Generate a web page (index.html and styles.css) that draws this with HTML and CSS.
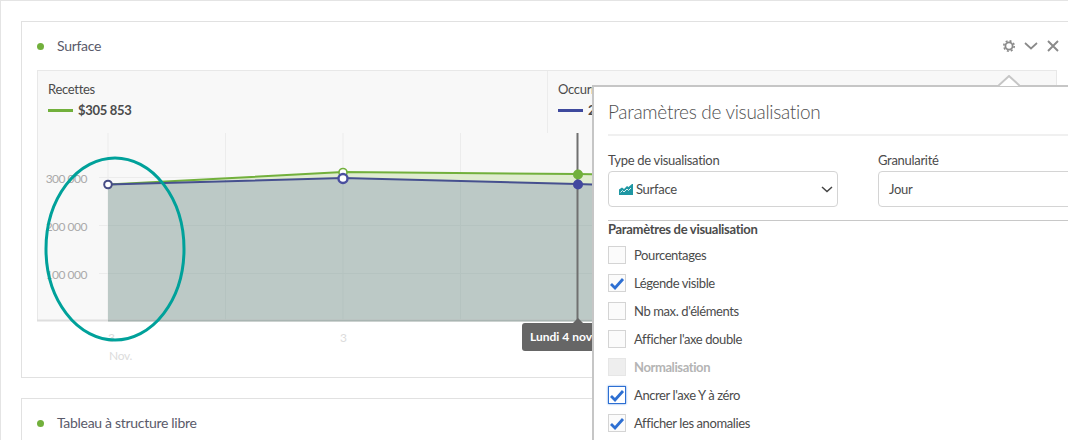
FILE: index.html
```html
<!DOCTYPE html>
<html>
  <head>
    <title>Surface</title>
    <link rel="stylesheet" href="styles.css">
  </head>
  <body>
    <div class="page">
      <section class="card card-surface">
        <div class="card-head">
          <span class="dot"></span>
          <span class="card-title">Surface</span>
          <div class="card-tools">
            <svg class="tool" width="12" height="12" viewBox="0 0 12 12"><circle cx="6" cy="6" r="3.6" fill="none" stroke="#8a8a8a" stroke-width="1.8"/><circle cx="6" cy="6" r="5.2" fill="none" stroke="#8a8a8a" stroke-width="1.6" stroke-dasharray="2 2.08"/></svg>
            <svg class="tool" width="14" height="8" viewBox="0 0 14 8"><path d="M1 1l6 5.5L13 1" fill="none" stroke="#8a8a8a" stroke-width="1.7"/></svg>
            <svg class="tool" width="12" height="12" viewBox="0 0 12 12"><path d="M1 1l10 10M11 1L1 11" fill="none" stroke="#8a8a8a" stroke-width="1.9"/></svg>
          </div>
        </div>
        <div class="chart-panel">
          <div class="legend">
            <div class="legend-item legend-item-first">
              <div class="legend-name">Recettes</div>
              <div class="legend-value"><span class="swatch swatch-green"></span>$305 853</div>
            </div>
            <div class="legend-item">
              <div class="legend-name">Occurrences</div>
              <div class="legend-value"><span class="swatch swatch-blue"></span>2</div>
            </div>
          </div>
          <svg class="plot" width="1019" height="244" viewBox="37 133 1019 244">
            <rect x="37" y="133" width="1019" height="187" fill="#f8f8f8"/>
            <path d="M37.5 133V320M1055.5 133V320" stroke="#e8e8e8"/>
            <path d="M108 133V320M225.5 133V320M343 133V320M460.5 133V320M694 133V320M811 133V320M928 133V320" stroke="#ececec"/>
            <path d="M99 177.5H1056M99 225.5H1056M99 273.5H1056" stroke="#ececec"/>
            <path d="M108 184.500L343 172L577 174L700 176V190L577 184L343 178Z" fill="#dfeccf"/>
            <path d="M108 184.500L343 178L577 184L700 188V320H108Z" fill="#bcc9c6"/>
            <path d="M225.500 180V320M343 178V320M460.500 180V320M108 225.500H700M108 273.500H700" stroke="#b5c3c0"/>
            <path d="M37 320.500H1056" stroke="#dedede" stroke-width="2"/>
            <path d="M108 320.500H700" stroke="#a9b5b2" stroke-width="2"/>
            <path d="M108 184.500L343 172L577 174L700 176" fill="none" stroke="#72b03c" stroke-width="2"/>
            <path d="M108 184.500L343 178L577 184L700 188" fill="none" stroke="#46508f" stroke-width="2"/>
            <path d="M577.500 133V320" stroke="#707070" stroke-width="2"/>
            <circle cx="343" cy="172.500" r="4" fill="#fff" stroke="#72b03c" stroke-width="1.600"/>
            <circle cx="343" cy="178.500" r="4.500" fill="#fff" stroke="#4a4f9f" stroke-width="2.400"/>
            <circle cx="108" cy="184.500" r="3.800" fill="#fff" stroke="#464c85" stroke-width="2"/>
            <circle cx="578" cy="174.500" r="5" fill="#72b03c"/>
            <circle cx="578" cy="184.500" r="5" fill="#42489f"/>
            <text class="y-label" x="87" y="183">300 000</text>
            <text class="y-label" x="87" y="231">200 000</text>
            <text class="y-label" x="87" y="279">100 000</text>
            <text class="x-label" x="108" y="342">3</text>
            <text class="x-label" x="340" y="342">3</text>
            <text class="x-label" x="109" y="360">Nov.</text>
            <ellipse cx="115" cy="249" rx="69" ry="91" fill="none" stroke="#00a19a" stroke-width="3"/>
          </svg>
        </div>
        <div class="tooltip">Lundi 4 novembre</div>
      </section>

      <section class="card">
        <div class="card-head">
          <span class="dot"></span>
          <span class="card-title">Tableau à structure libre</span>
        </div>
      </section>

      <div class="popover">
        <svg class="popover-caret" width="22" height="12" viewBox="0 0 22 12"><path d="M0 11L11 1L22 11" fill="#fff" stroke="#c6c6c6" stroke-width="2"/></svg>
        <h2 class="popover-title">Paramètres de visualisation</h2>
        <div class="fields">
          <div class="field">
            <label class="field-label">Type de visualisation</label>
            <div class="select">
              <svg width="14" height="11" viewBox="0 0 14 11"><path d="M0 11V5.500L3 3.500L5 5L8 2L9.500 3L13 0L14 0V11Z" fill="#1f97a3"/><path d="M1.500 8.500L3.500 6.500L5 8L8 5L9.500 6.500L12 4" fill="none" stroke="#d8f0f0" stroke-width="1"/></svg>
              <span class="select-text">Surface</span>
              <svg class="select-arrow" width="12" height="7" viewBox="0 0 12 7"><path d="M1 1l5 4.500L11 1" fill="none" stroke="#444" stroke-width="1.500"/></svg>
            </div>
          </div>
          <div class="field">
            <label class="field-label">Granularité</label>
            <div class="select"><span class="select-text">Jour</span></div>
          </div>
        </div>
        <div class="options">
          <div class="options-title">Paramètres de visualisation</div>
          <div class="option"><span class="box"></span>Pourcentages</div>
          <div class="option">
            <span class="box"><svg width="16" height="13" viewBox="0 0 16 13"><path d="M2 7l4 4 8-9" fill="none" stroke="#2d6fd2" stroke-width="2.800"/></svg></span>Légende visible
          </div>
          <div class="option"><span class="box"></span>Nb max. d'éléments</div>
          <div class="option"><span class="box"></span>Afficher l'axe double</div>
          <div class="option option-disabled"><span class="box"></span>Normalisation</div>
          <div class="option">
            <span class="box box-focus"><svg width="16" height="13" viewBox="0 0 16 13"><path d="M2 7l4 4 8-9" fill="none" stroke="#2d6fd2" stroke-width="2.800"/></svg></span>Ancrer l'axe Y à zéro
          </div>
          <div class="option">
            <span class="box"><svg width="16" height="13" viewBox="0 0 16 13"><path d="M2 7l4 4 8-9" fill="none" stroke="#2d6fd2" stroke-width="2.800"/></svg></span>Afficher les anomalies
          </div>
        </div>
      </div>
    </div>
  </body>
</html>
```

FILE: styles.css
```css
html, body {
  margin: 0;
  height: 100%;
  overflow: hidden;
  background-color: white;
}
body {
  font-family: "Lato", "Noto Sans", sans-serif;
  font-size: 13px;
  letter-spacing: -0.3px;
  color: #4b4b4b;
}
.page {
  position: relative;
  height: 440px;
  box-sizing: border-box;
  padding: 20px 0 0 20px;
  border-top: 1px solid #e4e4e4;
  border-left: 1px solid #e4e4e4;
  overflow: hidden;
}
.card {
  position: relative;
  border: 1px solid #e1e1e1;
  border-right: none;
  margin-bottom: 20px;
}
.card-surface {
  height: 355px;
}
.card-head {
  display: flex;
  align-items: center;
  height: 48px;
  padding-left: 15px;
}
.dot {
  width: 7px;
  height: 7px;
  border-radius: 50%;
  background-color: #72b03c;
  margin-right: 13px;
}
.card-title {
  position: relative;
  top: -1px;
  font-size: 14px;
  color: #5a5a6a;
}
.card-tools {
  display: flex;
  align-items: center;
  gap: 9px;
  margin-left: auto;
  margin-right: 9px;
}
.chart-panel {
  margin: 0 11px 0 15px;
}
.legend {
  display: flex;
  height: 63px;
  box-sizing: border-box;
  background-color: #f8f8f8;
  border: 1px solid #e8e8e8;
  border-width: 1px 1px 0 1px;
}
.legend-item {
  padding: 10px 10px 0 10px;
  border-left: 1px solid #ececec;
}
.legend-item-first {
  width: 489px;
  border-left: none;
}
.legend-name {
  line-height: 16px;
}
.legend-value {
  display: flex;
  align-items: center;
  margin-top: 5px;
  line-height: 16px;
  font-weight: 700;
}
.swatch {
  width: 25px;
  height: 3px;
  margin-right: 5px;
}
.swatch-green {
  background-color: #72b03c;
}
.swatch-blue {
  background-color: #3f4a9e;
}
.plot {
  display: block;
}
.y-label {
  font-size: 12px;
  letter-spacing: -0.5px;
  fill: #aaaaaa;
  text-anchor: end;
}
.x-label {
  font-size: 12px;
  fill: #dcdcdc;
}
.tooltip {
  position: absolute;
  left: 500px;
  top: 301px;
  width: 120px;
  height: 28px;
  box-sizing: border-box;
  padding-left: 8px;
  border-radius: 3px;
  background-color: #666666;
  color: white;
  font-size: 12px;
  font-weight: 700;
  letter-spacing: 0;
  line-height: 28px;
  white-space: nowrap;
}
.tooltip::before {
  content: "";
  position: absolute;
  left: 51px;
  top: -5px;
  border: 5px solid transparent;
  border-top: none;
  border-bottom-color: #666666;
}
.popover {
  position: absolute;
  left: 591px;
  top: 84px;
  width: 520px;
  height: 400px;
  box-sizing: border-box;
  padding: 0 0 0 14px;
  background-color: white;
  border: 2px solid #c6c6c6;
  border-width: 2px 0 0 2px;
}
.popover-caret {
  position: absolute;
  left: 404px;
  top: -12px;
}
.popover-title {
  margin: 0;
  height: 47px;
  line-height: 50px;
  font-size: 19px;
  font-weight: 300;
  letter-spacing: -0.3px;
  color: #505050;
  border-bottom: 2px solid #f0f0f0;
}
.fields {
  display: flex;
  gap: 40px;
  margin-top: 15px;
}
.field {
  width: 230px;
}
.field-label {
  display: block;
  line-height: 18px;
  margin-bottom: 2px;
}
.select {
  display: flex;
  align-items: center;
  height: 36px;
  box-sizing: border-box;
  padding: 0 10px;
  border: 1px solid #d4d4d4;
  border-radius: 4px;
  gap: 3px;
}
.select-text {
  color: #4b4b4b;
}
.select-arrow {
  margin-left: auto;
  margin-right: -6px;
}
.options {
  margin-top: 13px;
  border-top: 1px solid #c8c8c8;
}
.options-title {
  font-weight: 700;
  line-height: 16px;
  margin-bottom: 4px;
}
.option {
  display: flex;
  align-items: center;
  height: 28px;
  letter-spacing: -0.4px;
}
.box {
  display: flex;
  align-items: center;
  justify-content: center;
  width: 18px;
  height: 18px;
  box-sizing: border-box;
  margin-right: 8px;
  border: 1px solid #d4d4d4;
  background-color: #fbfbfb;
}
.option-disabled {
  color: #b4b4b4;
  font-weight: 700;
}
.option-disabled .box {
  background-color: #eeeeee;
  border-color: #e6e6e6;
}
.box-focus {
  border-color: #2d6fd2;
  background-color: white;
  box-shadow: 0 0 2px #5f95e6;
}
```
